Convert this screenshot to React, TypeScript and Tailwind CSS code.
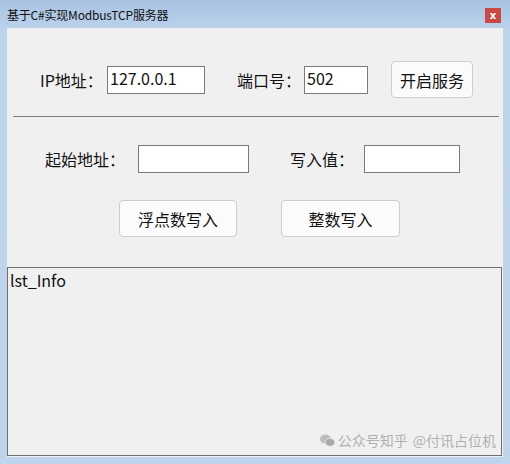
const FONT = "font-['Microsoft_YaHei','Noto_Sans_CJK_SC','Noto_Sans',sans-serif]";

function TextBox({ width, value }: { width: string; value?: string }) {
  return (
    <div
      className={`${width} h-[28px] shrink-0 border border-[#7a7a7a] bg-white pl-[2px] text-[16px] leading-[22px] text-[#111]`}
    >
      {value}
    </div>
  );
}

function Label({ width, text }: { width: string; text: string }) {
  return <div className={`${width} shrink-0 text-[16px] leading-[22px] text-[#111]`}>{text}</div>;
}

function Btn({ width, text, className = '' }: { width: string; text: string; className?: string }) {
  return (
    <div
      className={`${width} ${className} flex h-[37px] shrink-0 items-center justify-center rounded-[4px] border border-[#cdcdcd] bg-[#fbfbfb] text-[16px] text-[#111]`}
    >
      {text}
    </div>
  );
}

function WeChatMark() {
  return (
    <svg width="15" height="13" viewBox="0 0 15 13" className="shrink-0">
      <ellipse cx="5.5" cy="5" rx="5.5" ry="4.6" fill="#bdbdbd" />
      <ellipse cx="10" cy="8.3" rx="4.8" ry="4" fill="#a9a9a9" stroke="#f0f0f0" strokeWidth="0.8" />
    </svg>
  );
}

export default function App() {
  return (
    <div className={`${FONT} flex h-[464px] w-[510px] flex-col bg-[linear-gradient(180deg,#a7c2e1_0%,#bcd3ec_30px,#bfd5ed_100%)]`}>
      {/* title bar */}
      <div className="flex h-[28px] shrink-0 items-start justify-between pl-[7px] pr-[9px]">
        <div className="pt-[7px] text-[12px] leading-[16px] tracking-[-0.2px] text-[#111]">基于C#实现ModbusTCP服务器</div>
        <div className="mt-[8px] flex h-[15px] w-[16px] items-center justify-center bg-[#c84a44] font-['DejaVu_Sans',sans-serif] text-[10px] font-bold leading-none text-white">
          x
        </div>
      </div>

      {/* client area */}
      <div className="mx-[7px] mb-[7px] flex flex-1 flex-col bg-[#f0f0f0]">
        <div className="flex items-center pt-[33px]">
          <div className="ml-[33px] flex items-center">
            <Label width="w-[67px]" text="IP地址：" />
            <TextBox width="w-[98px]" value="127.0.0.1" />
            <Label width="ml-[32px] w-[67px]" text="端口号：" />
            <TextBox width="w-[64px]" value="502" />
            <Btn width="ml-[23px] w-[82px]" text="开启服务" />
          </div>
        </div>

        <div className="ml-[6px] mr-[4px] mt-[18px] h-px bg-[#7d7d7d]" />

        <div className="ml-[38px] mt-[28px] flex items-center">
          <Label width="w-[93px]" text="起始地址：" />
          <TextBox width="w-[111px]" />
          <Label width="ml-[41px] w-[74px]" text="写入值：" />
          <TextBox width="w-[96px]" />
        </div>

        <div className="ml-[112px] mt-[27px] flex">
          <Btn width="w-[118px]" text="浮点数写入" />
          <Btn width="ml-[44px] w-[119px]" text="整数写入" />
        </div>

        <div className="relative mb-px mr-px mt-[30px] flex-1 border border-[#6e6e6e] bg-[#f0f0f0] pl-[2px] pt-[1px]">
          <div className="text-[16px] leading-[22px] text-[#111]">lst_Info</div>
          <div className="absolute bottom-[6px] right-[5px] flex items-center gap-[3px] text-[14px] leading-[18px] text-[#b0b0b0]">
            <WeChatMark />
            <span>公众号知乎</span>
            <span className="ml-[2px]">@付讯占位机</span>
          </div>
        </div>
      </div>
    </div>
  );
}
